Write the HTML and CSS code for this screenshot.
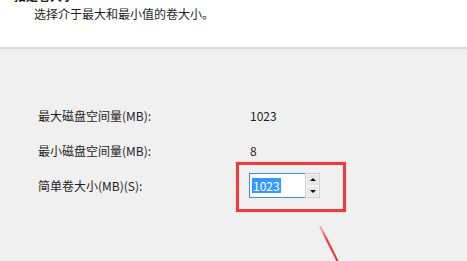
FILE: index.html
```html
<!DOCTYPE html>
<html>
<head>
	<title>指定卷大小</title>
	<link rel="stylesheet" href="styles.css">
</head>
<body>
	<div class="header">
		<div class="title">指定卷大小</div>
		<div class="subtitle">选择介于最大和最小值的卷大小。</div>
	</div>
	<div class="content">
		<div class="row">
			<span class="label">最大磁盘空间量(MB):</span>
			<span class="value">1023</span>
		</div>
		<div class="row">
			<span class="label">最小磁盘空间量(MB):</span>
			<span class="value">8</span>
		</div>
		<div class="row row-input">
			<span class="label">简单卷大小(MB)(S):</span>
			<div class="spin">
				<div class="spin-field"><span class="selected">1023</span></div>
				<div class="spin-buttons">
					<div class="spin-btn"><span class="arrow-up"></span></div>
					<div class="spin-btn"><span class="arrow-down"></span></div>
				</div>
			</div>
		</div>
		<!-- annotation drawn over the screenshot -->
		<div class="mark-box"></div>
		<svg class="mark-line" width="40" height="40" viewBox="0 0 40 40">
			<defs>
				<linearGradient id="fade" x1="0" y1="0" x2="0" y2="1">
					<stop offset="0" stop-color="#f04848" stop-opacity="0.3"/>
					<stop offset="0.4" stop-color="#f03c3c" stop-opacity="1"/>
				</linearGradient>
			</defs>
			<line x1="2" y1="1" x2="20" y2="37" stroke="url(#fade)" stroke-width="2.2"/>
		</svg>
	</div>
</body>
</html>
```

FILE: styles.css
```css
body {
	margin: 0;
	font-family: "Noto Sans CJK SC", "Microsoft YaHei", sans-serif;
	font-size: 12px;
	color: #1e1e1e;
	background-color: #f0f0f0;
	overflow: hidden;
}
.header {
	height: 47px;
	background-color: #fff;
	border-bottom: 2px solid #d8d8d8;
	padding-left: 14px;
	overflow: hidden;
	box-sizing: content-box;
}
.title {
	font-weight: bold;
	line-height: 16px;
	margin-top: -12px;
}
.subtitle {
	padding-left: 20px;
	line-height: 16px;
	margin-top: 2px;
}
.content {
	position: relative;
	height: 212px;
	padding: 59px 0 0 38px;
	box-sizing: border-box;
}
.row {
	display: flex;
	align-items: center;
	height: 16px;
	line-height: 16px;
	margin-bottom: 19px;
}
.row-input {
	height: 25px;
	margin-top: -5px;
}
.label {
	width: 211px;
}
.value {
	padding-left: 1px;
}
.spin {
	display: flex;
	height: 25px;
}
.spin-field {
	width: 53px;
	height: 23px;
	border: 1px solid #3d8ee0;
	border-right: none;
	background-color: #fff;
	padding-left: 2px;
	display: flex;
	align-items: center;
	box-sizing: content-box;
}
.selected {
	background-color: #3399ff;
	color: #fff;
	line-height: 15px;
	padding: 0 1px;
	font-size: 12px;
}
.spin-buttons {
	width: 15px;
	display: flex;
	flex-direction: column;
	border: 1px solid #cfcfcf;
	background-color: #dcdcdc;
	box-sizing: border-box;
}
.spin-btn {
	flex: 1;
	display: flex;
	align-items: center;
	justify-content: center;
	background-color: #e8e8e8;
	border: 1px solid #f4f4f4;
}
.arrow-up {
	width: 0;
	height: 0;
	border-left: 3px solid transparent;
	border-right: 3px solid transparent;
	border-bottom: 3px solid #111;
}
.arrow-down {
	width: 0;
	height: 0;
	border-left: 3px solid transparent;
	border-right: 3px solid transparent;
	border-top: 3px solid #111;
}
.mark-box {
	position: absolute;
	left: 236px;
	top: 113px;
	width: 110px;
	height: 50px;
	border: 3px solid #ef3b3b;
	box-shadow: 0 0 1px #f58080;
	box-sizing: border-box;
}
.mark-line {
	position: absolute;
	left: 318px;
	top: 176px;
}
```
